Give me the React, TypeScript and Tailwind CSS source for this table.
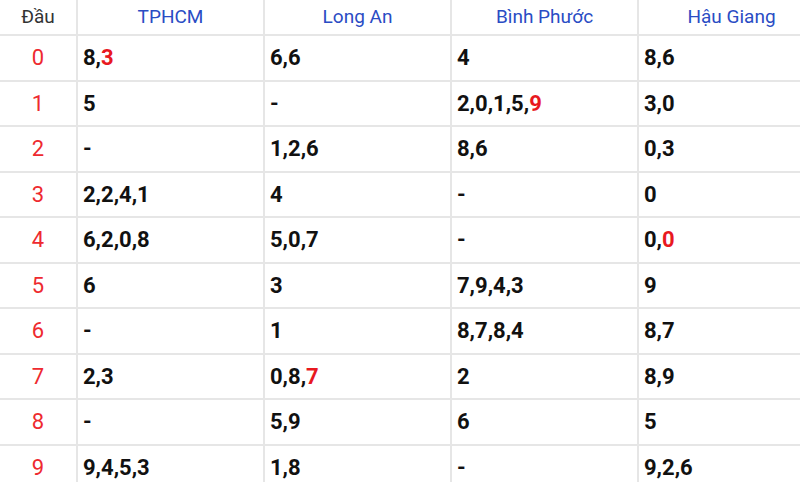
type Cell = { text: string; red?: string }

const headers = ['TPHCM', 'Long An', 'Bình Phước', 'Hậu Giang']

const rows: Cell[][] = [
  [{ text: '8,', red: '3' }, { text: '6,6' }, { text: '4' }, { text: '8,6' }],
  [{ text: '5' }, { text: '-' }, { text: '2,0,1,5,', red: '9' }, { text: '3,0' }],
  [{ text: '-' }, { text: '1,2,6' }, { text: '8,6' }, { text: '0,3' }],
  [{ text: '2,2,4,1' }, { text: '4' }, { text: '-' }, { text: '0' }],
  [{ text: '6,2,0,8' }, { text: '5,0,7' }, { text: '-' }, { text: '0,', red: '0' }],
  [{ text: '6' }, { text: '3' }, { text: '7,9,4,3' }, { text: '9' }],
  [{ text: '-' }, { text: '1' }, { text: '8,7,8,4' }, { text: '8,7' }],
  [{ text: '2,3' }, { text: '0,8,', red: '7' }, { text: '2' }, { text: '8,9' }],
  [{ text: '-' }, { text: '5,9' }, { text: '6' }, { text: '5' }],
  [{ text: '9,4,5,3' }, { text: '1,8' }, { text: '-' }, { text: '9,2,6' }],
]

export default function App() {
  return (
    <div
      className="h-[482px] w-[800px] overflow-hidden bg-white"
      style={{ fontFamily: 'Roboto, "Noto Sans", sans-serif' }}
    >
      <div className="grid w-[826px] grid-cols-[78px_187px_187px_187px_187px]">
        <div className="flex h-[36px] items-center justify-center border-r-2 border-b-2 border-[#e6e6e6] text-[19px] text-[#333]">
          Đầu
        </div>
        {headers.map((h) => (
          <div
            key={h}
            className="flex h-[36px] items-center justify-center border-r-2 border-b-2 border-[#e6e6e6] text-[19px] text-[#2a4cc4]"
          >
            {h}
          </div>
        ))}
        {rows.map((row, i) => (
          <div key={i} className="contents">
            <div className="flex h-[45.5px] items-center justify-center border-r-2 border-b-2 border-[#e6e6e6] text-[22px] text-[#ee2a2f]">
              {i}
            </div>
            {row.map((c, j) => (
              <div
                key={j}
                className="flex h-[45.5px] items-center border-r-2 border-b-2 border-[#e6e6e6] pl-[5px] text-[22px] font-bold text-[#111]"
              >
                {c.text}
                {c.red && <span className="text-[#e8191f]">{c.red}</span>}
              </div>
            ))}
          </div>
        ))}
      </div>
    </div>
  )
}
